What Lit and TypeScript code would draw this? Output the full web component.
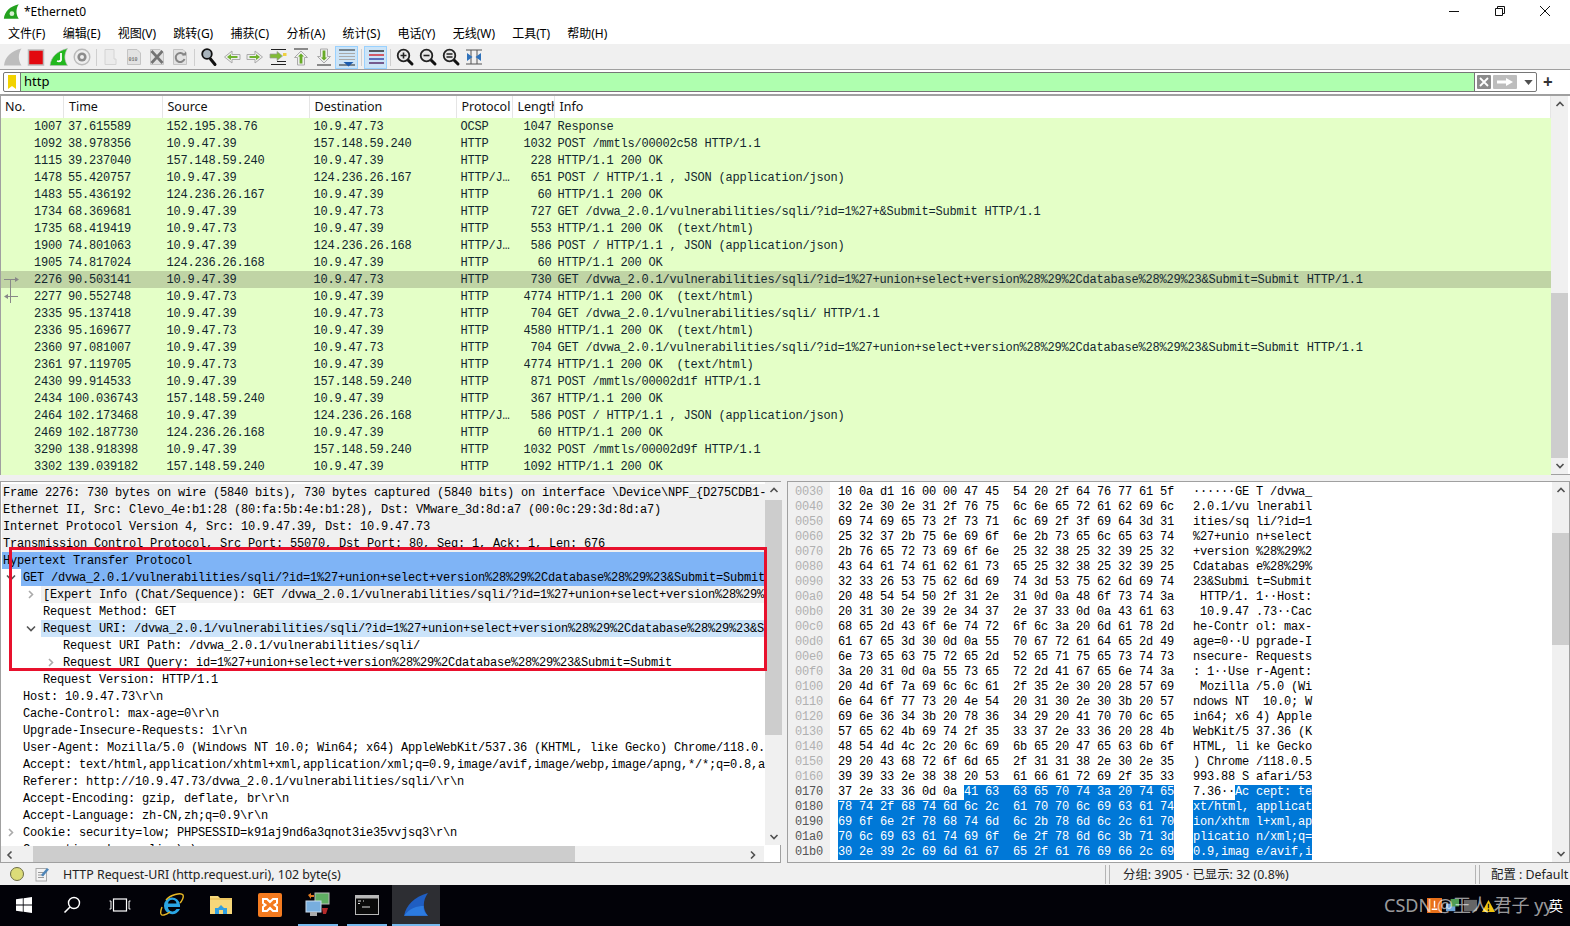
import { LitElement, html, css, svg } from "lit";
import { customElement } from "lit/decorators.js";

const MENUS = ["文件(F)", "编辑(E)", "视图(V)", "跳转(G)", "捕获(C)", "分析(A)", "统计(S)", "电话(Y)", "无线(W)", "工具(T)", "帮助(H)"];

const COLS = ["No.", "Time", "Source", "Destination", "Protocol", "Length", "Info"];

const SQLI = "/dvwa_2.0.1/vulnerabilities/sqli/";
const UNION = SQLI + "?id=1%27+union+select+version%28%29%2Cdatabase%28%29%23&Submit=Submit";

const PACKETS = [
  ["1007", "37.615589", "152.195.38.76", "10.9.47.73", "OCSP", "1047", "Response"],
  ["1092", "38.978356", "10.9.47.39", "157.148.59.240", "HTTP", "1032", "POST /mmtls/00002c58 HTTP/1.1"],
  ["1115", "39.237040", "157.148.59.240", "10.9.47.39", "HTTP", "228", "HTTP/1.1 200 OK"],
  ["1478", "55.420757", "10.9.47.39", "124.236.26.167", "HTTP/J…", "651", "POST / HTTP/1.1 , JSON (application/json)"],
  ["1483", "55.436192", "124.236.26.167", "10.9.47.39", "HTTP", "60", "HTTP/1.1 200 OK"],
  ["1734", "68.369681", "10.9.47.39", "10.9.47.73", "HTTP", "727", "GET " + SQLI + "?id=1%27+&Submit=Submit HTTP/1.1"],
  ["1735", "68.419419", "10.9.47.73", "10.9.47.39", "HTTP", "553", "HTTP/1.1 200 OK  (text/html)"],
  ["1900", "74.801063", "10.9.47.39", "124.236.26.168", "HTTP/J…", "586", "POST / HTTP/1.1 , JSON (application/json)"],
  ["1905", "74.817024", "124.236.26.168", "10.9.47.39", "HTTP", "60", "HTTP/1.1 200 OK"],
  ["2276", "90.503141", "10.9.47.39", "10.9.47.73", "HTTP", "730", "GET " + UNION + " HTTP/1.1"],
  ["2277", "90.552748", "10.9.47.73", "10.9.47.39", "HTTP", "4774", "HTTP/1.1 200 OK  (text/html)"],
  ["2335", "95.137418", "10.9.47.39", "10.9.47.73", "HTTP", "704", "GET " + SQLI + " HTTP/1.1"],
  ["2336", "95.169677", "10.9.47.73", "10.9.47.39", "HTTP", "4580", "HTTP/1.1 200 OK  (text/html)"],
  ["2360", "97.081007", "10.9.47.39", "10.9.47.73", "HTTP", "704", "GET " + UNION + " HTTP/1.1"],
  ["2361", "97.119705", "10.9.47.73", "10.9.47.39", "HTTP", "4774", "HTTP/1.1 200 OK  (text/html)"],
  ["2430", "99.914533", "10.9.47.39", "157.148.59.240", "HTTP", "871", "POST /mmtls/00002d1f HTTP/1.1"],
  ["2434", "100.036743", "157.148.59.240", "10.9.47.39", "HTTP", "367", "HTTP/1.1 200 OK"],
  ["2464", "102.173468", "10.9.47.39", "124.236.26.168", "HTTP/J…", "586", "POST / HTTP/1.1 , JSON (application/json)"],
  ["2469", "102.187730", "124.236.26.168", "10.9.47.39", "HTTP", "60", "HTTP/1.1 200 OK"],
  ["3290", "138.918398", "10.9.47.39", "157.148.59.240", "HTTP", "1032", "POST /mmtls/00002d9f HTTP/1.1"],
  ["3302", "139.039182", "157.148.59.240", "10.9.47.39", "HTTP", "1092", "HTTP/1.1 200 OK"],
];

// level, arrow (""|">"|"v"), row class, text
const DETAILS: [number, string, string, string][] = [
  [0, "", "grey", "Frame 2276: 730 bytes on wire (5840 bits), 730 bytes captured (5840 bits) on interface \\Device\\NPF_{D275CDB1-"],
  [0, "", "grey", "Ethernet II, Src: Clevo_4e:b1:28 (80:fa:5b:4e:b1:28), Dst: VMware_3d:8d:a7 (00:0c:29:3d:8d:a7)"],
  [0, "", "grey", "Internet Protocol Version 4, Src: 10.9.47.39, Dst: 10.9.47.73"],
  [0, "", "grey", "Transmission Control Protocol, Src Port: 55070, Dst Port: 80, Seq: 1, Ack: 1, Len: 676"],
  [0, "", "sel", "Hypertext Transfer Protocol"],
  [1, "v", "sel", "GET " + UNION + " HTTP/1.1\\r\\n"],
  [2, ">", "grey", "[Expert Info (Chat/Sequence): GET " + UNION + " HTTP/1.1\\r\\n]"],
  [2, "", "", "Request Method: GET"],
  [2, "v", "soft", "Request URI: " + UNION],
  [3, "", "", "Request URI Path: " + SQLI],
  [3, ">", "", "Request URI Query: id=1%27+union+select+version%28%29%2Cdatabase%28%29%23&Submit=Submit"],
  [2, "", "", "Request Version: HTTP/1.1"],
  [1, "", "", "Host: 10.9.47.73\\r\\n"],
  [1, "", "", "Cache-Control: max-age=0\\r\\n"],
  [1, "", "", "Upgrade-Insecure-Requests: 1\\r\\n"],
  [1, "", "", "User-Agent: Mozilla/5.0 (Windows NT 10.0; Win64; x64) AppleWebKit/537.36 (KHTML, like Gecko) Chrome/118.0.5993.88 Safari/537.36\\r\\n"],
  [1, "", "", "Accept: text/html,application/xhtml+xml,application/xml;q=0.9,image/avif,image/webp,image/apng,*/*;q=0.8,application/signed-exchange\\r\\n"],
  [1, "", "", "Referer: http://10.9.47.73/dvwa_2.0.1/vulnerabilities/sqli/\\r\\n"],
  [1, "", "", "Accept-Encoding: gzip, deflate, br\\r\\n"],
  [1, "", "", "Accept-Language: zh-CN,zh;q=0.9\\r\\n"],
  [1, ">", "", "Cookie: security=low; PHPSESSID=k91aj9nd6a3qnot3ie35vvjsq3\\r\\n"],
  [1, "", "", "Connection: keep-alive\\r\\n"],
];

const HEX_START = 0x30;
const SEL_START = 0x176;
const HEX = [
  "100ad11600004745 54202f647677615f", "322e302e312f7675 6c6e65726162696c", "6974696573 2f7371 6c692f3f69643d31",
  "253237 2b756e696f 6e2b73656c656374", "2b76657273696f6e 253238253239 2532", "4364617461626173 6525323825 323925",
  "3233265375626d69 743d5375626d6974", "2048545450 2f312e 310d0a486f73743a", "2031302e392e3437 2e37330d0a436163",
  "6865 2d436f6e7472 6f6c3a206d61782d", "6167653d300d0a55 706772616465 2d49", "6e7365637572652d 5265717565737473",
  "3a20310d0a557365 722d4167656e743a", "204d6f7a696c6c61 2f352e30202857 69", "6e646f7773204e54 2031302e303b2057",
  "696e36343b207836 342920 4170706c65", "5765624b69742f35 33372e3336202 84b", "48544d4c2c206c69 6b65204765636b6f",
  "29204368726f6d65 2f3131382e302e35", "3939332e38382053 6166617269 2f3533", "372e33360d0a4163 636570743a207465",
  "78742f68746d6c2c 6170706c69636174", "696f6e2f7868746d 6c2b786d6c2c6170", "706c69636174696f 6e2f786d6c3b713d",
  "302e392c696d6167 652f617669662c69",
].map((s) => s.replace(/ /g, ""));

const chevUp = svg`<path d="M1.5 6 L5 2.5 L8.5 6" fill="none" stroke="#505050" stroke-width="1.6"/>`;
const chevDown = svg`<path d="M1.5 3 L5 6.5 L8.5 3" fill="none" stroke="#505050" stroke-width="1.6"/>`;
const chevLeft = svg`<path d="M6.5 1.5 L3 5 L6.5 8.5" fill="none" stroke="#505050" stroke-width="1.6"/>`;
const chevRight = svg`<path d="M3 1.5 L6.5 5 L3 8.5" fill="none" stroke="#505050" stroke-width="1.6"/>`;

const chev = (p: unknown) => html`<svg class="chev" viewBox="0 0 10 9" width="10" height="9">${p}</svg>`;

const FIN = "M1 18.5 C2 10 8 4 18.5 1.5 C15 7 15 13 18.5 18.5 Z";

const ic = (body: unknown) => html`<svg class="tool" viewBox="0 0 20 20" width="20" height="20">${body}</svg>`;

const doc = svg`<path d="M3.5 2.5 H13 L16.5 6 V17.5 H3.5 Z" fill="#e2e2e2" stroke="#c4c4c4"/>`;
const lens = (inner: unknown) => svg`
  <path d="M12.5 12.5 L17 17" stroke="#111" stroke-width="3" stroke-linecap="round"/>
  <circle cx="8.5" cy="8.5" r="5.8" fill="#e8e8e8" stroke="#222" stroke-width="1.8"/>${inner}`;
const arrowH = (flip: boolean) => svg`
  <g transform=${flip ? "translate(20 0) scale(-1 1)" : ""}>
    <path d="M2 7.5 H10 V4 L17.5 10 L10 16 V12.5 H2 Z" fill="#eee" stroke="#aaa"/>
    <path d="M4.5 9 H11 V7 L15 10 L11 13 V11 H4.5 Z" fill="#6fb22e"/>
  </g>`;

const TOOLS: unknown[] = [
  ic(svg`<path d=${FIN} fill="#bdbdbd"/>`),
  ic(svg`<rect x="2.5" y="3" width="15" height="15" fill="#e3090f" stroke="#bbb" stroke-width="1.5"/>`),
  ic(svg`<path d=${FIN} fill="#22b81e" stroke="#bbb" stroke-width=".6"/><path d="M12 6 V13 Q11 15 8 14" fill="none" stroke="#fff" stroke-width="1.8"/>`),
  ic(svg`<circle cx="10" cy="10" r="7.8" fill="#eee" stroke="#bbb" stroke-width="1.4"/><circle cx="10" cy="10" r="4.6" fill="#8c8c8c"/><circle cx="10" cy="10" r="2" fill="#eee"/>`),
  null,
  ic(svg`<path d="M4 2.5 H13 V12 L15 12 V17.5 H4 Z" fill="#ebebeb" stroke="#d4d4d4"/>`),
  ic(svg`${doc}<text x="4.6" y="14" font-size="5" font-family="Liberation Mono" font-weight="700" fill="#777">010</text>`),
  ic(svg`${doc}<path d="M4.5 4 L15.5 16 M15.5 4 L4.5 16" stroke="#737373" stroke-width="2.6"/>`),
  ic(svg`${doc}<path d="M14 8 A4.5 4.5 0 1 0 14.5 12" fill="none" stroke="#858585" stroke-width="2"/><path d="M12 8.5 H16 V4.5 Z" fill="#858585"/>`),
  null,
  ic(svg`<path d="M11.5 12 L16 17.5" stroke="#111" stroke-width="3" stroke-linecap="round"/><circle cx="8" cy="7" r="4.8" fill="#a9b4bc" stroke="#111" stroke-width="1.8"/>`),
  ic(arrowH(true)),
  ic(arrowH(false)),
  ic(svg`<path d="M3 2.5 H18 M3 17.5 H18 M9 14.5 H18" stroke="#222" stroke-width="1.2"/><path d="M2 7 H9 V4.5 L14.5 9 L9 13.5 V11 H2 Z" fill="#80bb35" stroke="#999" stroke-width=".7"/><rect x="15" y="6" width="3.5" height="3" fill="#f0d040"/>`),
  ic(svg`<path d="M3 2 H17" stroke="#444" stroke-width="1.2"/><path d="M6.5 18 V10.5 H3.5 L10 4 L16.5 10.5 H13.5 V18 Z" fill="#eee" stroke="#aaa"/><path d="M8.6 16.5 V9.5 H7 L10 6.5 L13 9.5 H11.4 V16.5 Z" fill="#68ab26"/>`),
  ic(svg`<path d="M3 18 H17" stroke="#444" stroke-width="1.2"/><path d="M6.5 2 V9.5 H3.5 L10 16 L16.5 9.5 H13.5 V2 Z" fill="#eee" stroke="#aaa"/><path d="M8.6 3.5 V10.5 H7 L10 13.5 L13 10.5 H11.4 V3.5 Z" fill="#68ab26"/>`),
  ic(svg`<path d="M2 3 H18 M2 18 H18" stroke="#222" stroke-width="1.2"/><path d="M2 6.5 H18 M2 9.5 H18 M2 12.5 H18" stroke="#aaa" stroke-width="1.2"/><path d="M6.5 15 H16.5 L11.5 19.5 Z" fill="#1c5cae"/>`),
  null,
  ic(svg`<path d="M3 4 H18" stroke="#222" stroke-width="1.4"/><path d="M3 8 H18" stroke="#d4202a" stroke-width="1.4"/><path d="M3 12 H18" stroke="#2a3ea0" stroke-width="1.4"/><path d="M3 16 H18" stroke="#502060" stroke-width="1.4"/>`),
  null,
  ic(lens(svg`<path d="M5.5 8.5 H11.5 M8.5 5.5 V11.5" stroke="#222" stroke-width="1.6"/>`)),
  ic(lens(svg`<path d="M5.5 8.5 H11.5" stroke="#222" stroke-width="1.6"/>`)),
  ic(lens(svg`<path d="M5.5 7 H11.5 M5.5 10 H11.5" stroke="#222" stroke-width="1.3"/>`)),
  ic(svg`<path d="M2 3 H18 M2 17 H18 M7 3 V17 M13 3 V17" stroke="#555" stroke-width="1"/><path d="M3 6 L8.5 10 L3 14 Z M17 6 L11.5 10 L17 14 Z" fill="#2f72bb"/>`),
];

@customElement("app-root")
export class AppRoot extends LitElement {
  static styles = css`
    :host {
      display: flex;
      flex-direction: column;
      width: 1570px;
      height: 926px;
      overflow: hidden;
      position: relative;
      background: #f0f0f0;
      color: #000;
      font-family: "Noto Sans", "Noto Sans CJK SC", sans-serif;
      font-size: 12px;
    }
    svg { display: block; flex: none; }

    .title {
      height: 22px;
      background: #fff;
      display: flex;
      align-items: center;
      padding-left: 3px;
      flex: none;
    }
    .title .name { flex: 1; margin-left: 4px; }
    .winbtn { width: 45.5px; display: flex; justify-content: center; }
    .winbtn.last { margin-right: 2px; }

    .menu {
      height: 22px;
      background: #fff;
      display: flex;
      align-items: center;
      gap: 17.2px;
      padding-left: 8px;
      flex: none;
      border-bottom: 1px solid #f0f0f0;
    }

    .toolbar {
      height: 24px;
      flex: none;
      display: flex;
      align-items: center;
      padding-left: 1px;
      background: #f0f0f0;
      border-bottom: 1px solid #a0a0a0;
    }
    .tbtn {
      width: 23px;
      height: 23px;
      display: flex;
      align-items: center;
      justify-content: center;
      box-sizing: border-box;
    }
    .tbtn.on { background: #cce4f7; border: 1px solid #99d1ff; }
    .tsep { width: 6px; display: flex; justify-content: center; }
    .tsep::after { content: ""; width: 1px; height: 17px; background: #cfcfcf; }

    .filter {
      height: 24px;
      flex: none;
      background: #fff;
      display: flex;
      align-items: center;
      padding-left: 3px;
    }
    .fbox {
      width: 1534px;
      height: 20px;
      box-sizing: border-box;
      border: 1px solid #767676;
      border-radius: 2px;
      display: flex;
      align-items: stretch;
    }
    .bookmark {
      width: 16px;
      display: flex;
      align-items: center;
      justify-content: center;
      border-right: 1px solid #767676;
    }
    .ftext {
      width: 1454px;
      background: #afffaf;
      border-right: 1px solid #767676;
      padding-left: 3px;
      box-sizing: border-box;
      font-size: 13px;
      line-height: 16px;
    }
    .fbtns { flex: 1; display: flex; align-items: center; gap: 2px; padding-left: 2px; }
    .plus { margin-left: 6px; font-size: 17px; font-weight: 700; color: #333; line-height: 20px; }

    .list {
      height: 381px;
      flex: none;
      display: flex;
      background: #fff;
      border-top: 2px solid #a0a0a0;
      border-left: 1px solid #a0a0a0;
      box-sizing: border-box;
      border-bottom: 1px solid #a0a0a0;
    }
    .listmain { width: 1550px; flex: none; }
    .grid {
      display: grid;
      grid-template-columns: 63px 98.5px 147px 147px 56px 42px 1fr;
    }
    .head { height: 22px; background: #fff; }
    .head div {
      line-height: 21px;
      padding-left: 5px;
      overflow: hidden;
      white-space: nowrap;
      border-right: 1px solid #e5e5e5;
      font-size: 12.5px;
      color: #111;
    }
    .head div:first-child { padding-left: 4px; }
    .row {
      height: 17px;
      background: #e4ffc7;
      color: #12272e;
      position: relative;
    }
    .row.cur { background: #c0d4a5; }
    .row div { height: 17px; line-height: 19px; padding-left: 4px; white-space: pre; overflow: hidden; }
    .row .r { text-align: right; padding: 0 2px 0 0; }
    .row .r5 { text-align: right; padding: 0 3px 0 0; }
    .row .i { padding-left: 3px; }
    .row svg { position: absolute; left: 1px; top: 0; }
    .row, .drow, .hex {
      font-family: "Liberation Mono", monospace;
      font-size: 12px;
      letter-spacing: -0.2px;
    }

    .vbar {
      width: 17px;
      flex: none;
      background: #f0f0f0;
      position: relative;
      display: flex;
      flex-direction: column;
      align-items: center;
      justify-content: space-between;
      padding: 4px 0;
      box-sizing: border-box;
    }
    .thumb { position: absolute; left: 0; right: 0; background: #cdcdcd; }

    .split { height: 6px; flex: none; background: #f0f0f0; }

    .lower { height: 382px; flex: none; display: flex; }
    .pane {
      box-sizing: border-box;
      border: 1px solid #a0a0a0;
      background: #fff;
      display: flex;
      height: 100%;
    }
    .left { width: 781px; flex: none; flex-direction: column; }
    .leftbody { flex: 1; display: flex; min-height: 0; }
    .drows { width: 764px; flex: none; overflow: hidden; padding-top: 2px; box-sizing: border-box; }
    .drow {
      height: 17px;
      overflow: hidden;
      position: relative;
    }
    .drow .bg { display: block; height: 17px; line-height: 19px; white-space: pre; overflow: hidden; }
    .drow.grey .bg { background: #f0f0f0; }
    .drow.sel .bg { background: #7fb4f6; }
    .drow.soft .bg { background: #cce4fa; }
    .drow svg { position: absolute; top: 4px; }
    .hbar {
      height: 16px;
      flex: none;
      background: #f0f0f0;
      display: flex;
      align-items: center;
      justify-content: space-between;
      padding: 0 6px 0 4px;
      position: relative;
      box-sizing: border-box;
      margin-right: 16px;
    }
    .hbar .hthumb { position: absolute; left: 32px; width: 542px; top: 0; bottom: 0; background: #cdcdcd; }

    .gutter { width: 6px; flex: none; background: #f0f0f0; }

    .right { flex: 1; min-width: 0; }
    .hexmain { flex: 1; display: flex; overflow: hidden; }
    .offs { width: 42px; flex: none; background: #f0f0f0; padding: 3px 0 0 7px; box-sizing: border-box; }
    .hex { height: 15px; line-height: 15px; white-space: pre; }
    .offs .hex { color: #b0b0b0; }
    .offs .hex.d { color: #555; }
    .bytes { padding: 3px 0 0 8px; width: 363px; flex: none; box-sizing: border-box; }
    .ascii { flex: 1; padding-top: 3px; }
    .mark { display: inline-block; height: 15px; vertical-align: top; background: #0078d7; color: #fff; }

    .status {
      height: 22px;
      flex: none;
      display: flex;
      align-items: center;
      background: #f0f0f0;
      padding-left: 10px;
      color: #222;
      font-size: 12.4px;
    }
    .status .msg { width: 1042px; margin-left: 13px; }
    .ssep { width: 3px; height: 19px; border: solid #b4b4b4; border-width: 0 1px; margin-right: 13px; }
    .status .stat { width: 352px; }
    .ssep.second { margin-right: 11px; }
    .dot {
      width: 12px;
      height: 12px;
      border-radius: 50%;
      background: #dcdc78;
      border: 1px solid #6c6c44;
      margin-right: 10px;
    }

    .task {
      flex: 1;
      background: #020208;
      display: flex;
      align-items: stretch;
      position: relative;
    }
    .tk {
      width: 48px;
      display: flex;
      align-items: center;
      justify-content: center;
      box-sizing: border-box;
      border-bottom: 2px solid transparent;
    }
    .tk.app { width: 49px; }
    .tk.first { margin-left: 3px; }
    .tk.run { border-bottom-color: #76b9ed; margin: 0 5px 0 4px; width: 40px; }
    .tk.act { background: #2d2e33; border-bottom-color: #76b9ed; }

    .redbox {
      position: absolute;
      left: 9px;
      top: 547px;
      width: 758px;
      height: 124px;
      box-sizing: border-box;
      border: 3px solid #e8112d;
    }
    .wm {
      position: absolute;
      left: 1384px;
      top: 892px;
      font-size: 18px;
      line-height: 26px;
      color: rgba(255, 255, 255, 0.62);
      white-space: nowrap;
    }
    .ime {
      position: absolute;
      right: 7px;
      top: 897px;
      color: #fff;
      font-size: 14px;
      line-height: 18px;
    }
    .trayicons {
      position: absolute;
      left: 1427px;
      top: 898px;
      display: flex;
      gap: 3px;
    }
  `;

  private vbar(top: number, h: number, total: number) {
    return html`<div class="vbar" style="height:${total}px">
      <div class="thumb" style="top:${top}px;height:${h}px"></div>
      ${chev(chevUp)}${chev(chevDown)}
    </div>`;
  }

  private renderTitle() {
    return html`<div class="title">
      <svg viewBox="0 0 20 20" width="17" height="17">
        <path d=${FIN} fill="#24a21f"/>
        <circle cx="10.5" cy="12.5" r="2.8" fill="#d6efd0"/>
      </svg>
      <span class="name">*Ethernet0</span>
      <div class="winbtn"><svg viewBox="0 0 12 12" width="12" height="12"><path d="M1 6.5 H11" stroke="#111"/></svg></div>
      <div class="winbtn"><svg viewBox="0 0 12 12" width="12" height="12"><path d="M1.5 3.5 H8.5 V10.5 H1.5 Z M3.5 3.5 V1.5 H10.5 V8.5 H8.5" fill="none" stroke="#111"/></svg></div>
      <div class="winbtn last"><svg viewBox="0 0 12 12" width="12" height="12"><path d="M1 1 L11 11 M11 1 L1 11" stroke="#111"/></svg></div>
    </div>`;
  }

  private renderToolbar() {
    return html`<div class="toolbar">
      ${TOOLS.map((t, i) =>
        t === null
          ? html`<div class="tsep"></div>`
          : html`<div class="tbtn ${i === 16 || i === 18 ? "on" : ""}">${t}</div>`
      )}
    </div>`;
  }

  private renderFilter() {
    return html`<div class="filter">
      <div class="fbox">
        <div class="bookmark">
          <svg viewBox="0 0 8 14" width="8" height="14"><path d="M0 0 H8 V14 L4 11 L0 14 Z" fill="#f2d200"/></svg>
        </div>
        <div class="ftext">http</div>
        <div class="fbtns">
          <svg viewBox="0 0 14 14" width="14" height="14"><rect width="14" height="14" rx="1" fill="#8c8c8c"/><path d="M3 3 L11 11 M11 3 L3 11" stroke="#fff" stroke-width="1.8"/></svg>
          <svg viewBox="0 0 24 14" width="24" height="14"><rect width="24" height="14" rx="1" fill="#bdbdbd"/><path d="M4 5.5 H13 V3 L20 7 L13 11 V8.5 H4 Z" fill="#fff"/></svg>
          <svg viewBox="0 0 10 6" width="9" height="5" style="margin-left:5px"><path d="M0 0 H10 L5 6 Z" fill="#505050"/></svg>
        </div>
      </div>
      <span class="plus">+</span>
    </div>`;
  }

  private renderList() {
    return html`<div class="list">
      <div class="listmain">
        <div class="grid head">${COLS.map((c) => html`<div>${c}</div>`)}</div>
        ${PACKETS.map(
          (p) => html`<div class="grid row ${p[0] === "2276" ? "cur" : ""}">
            ${p[0] === "2276"
              ? html`<svg viewBox="0 0 18 17" width="18" height="17"><path d="M8.5 8 V17" stroke="#888"/><path d="M2 8.5 H13" stroke="#888"/><path d="M13 6 L17 8.5 L13 11 Z" fill="#888"/></svg>`
              : p[0] === "2277"
                ? html`<svg viewBox="0 0 18 17" width="18" height="17"><path d="M8.5 0 V15" stroke="#888"/><path d="M5 8.5 H16" stroke="#888"/><path d="M6 6 L2 8.5 L6 11 Z" fill="#888"/></svg>`
                : ""}
            <div class="r">${p[0]}</div>
            <div>${p[1]}</div>
            <div>${p[2]}</div>
            <div>${p[3]}</div>
            <div>${p[4]}</div>
            <div class="r5">${p[5]}</div>
            <div class="i">${p[6]}</div>
          </div>`
        )}
      </div>
      ${this.vbar(197, 165, 378)}
    </div>`;
  }

  private renderDetails() {
    return html`<div class="pane left">
      <div class="leftbody">
        <div class="drows">
          ${DETAILS.map(([lvl, arrow, cls, text]) => {
            const x = 2 + lvl * 20;
            return html`<div class="drow ${cls}">
              <span class="bg" style="margin-left:${lvl === 0 ? 1 : x - 2}px;padding-left:${lvl === 0 ? 1 : 2}px">${text}</span>
              ${arrow
                ? html`<svg viewBox="0 0 10 9" width="10" height="9" style="left:${x - 17}px">
                    ${arrow === ">"
                      ? svg`<path d="M3 1 L6.5 4.5 L3 8" fill="none" stroke="#aaa" stroke-width="1.6"/>`
                      : svg`<path d="M1 2.5 L5 6.5 L9 2.5" fill="none" stroke="#555" stroke-width="1.6"/>`}
                  </svg>`
                : ""}
            </div>`;
          })}
        </div>
        ${this.vbar(18, 235, 363)}
      </div>
      <div class="hbar"><div class="hthumb"></div>${chev(chevLeft)}${chev(chevRight)}</div>
    </div>`;
  }

  private renderHex() {
    const selStart = (i: number) => {
      const base = HEX_START + i * 16;
      return base + 16 <= SEL_START ? 16 : Math.max(0, SEL_START - base);
    };
    const hexLine = (h: string, i: number) => {
      const txt = (from: number, to: number) => {
        let s = "";
        for (let n = from; n < to; n++) {
          s += h.slice(n * 2, n * 2 + 2) + (n === 15 ? "" : n === 7 ? "  " : " ");
        }
        return s;
      };
      const start = selStart(i);
      return html`<div class="hex">${txt(0, start)}${start < 16 ? html`<span class="mark">${txt(start, 16)}</span>` : ""}</div>`;
    };
    const asciiLine = (h: string, i: number) => {
      const ch = (n: number) => {
        const v = parseInt(h.slice(n * 2, n * 2 + 2), 16);
        return v >= 32 && v < 127 ? String.fromCharCode(v) : "·";
      };
      const txt = (from: number, to: number) => {
        let s = "";
        for (let n = from; n < to; n++) s += ch(n) + (n === 7 ? " " : "");
        return s;
      };
      const start = selStart(i);
      return html`<div class="hex">${txt(0, start)}${start < 16 ? html`<span class="mark">${txt(start, 16)}</span>` : ""}</div>`;
    };
    return html`<div class="pane right">
      <div class="hexmain">
        <div class="offs">
          ${HEX.map((_, i) => {
            const off = HEX_START + i * 16;
            return html`<div class="hex ${off >= 0x170 ? "d" : ""}">${off.toString(16).padStart(4, "0")}</div>`;
          })}
        </div>
        <div class="bytes">${HEX.map(hexLine)}</div>
        <div class="ascii">${HEX.map(asciiLine)}</div>
      </div>
      ${this.vbar(51, 112, 380)}
    </div>`;
  }

  private renderStatus() {
    return html`<div class="status">
      <div class="dot"></div>
      <svg viewBox="0 0 16 16" width="16" height="16">
        <rect x="2" y="2.5" width="10.5" height="12.5" fill="#f4f4f4" stroke="#aaa"/>
        <path d="M4 6.5 H10 M4 9 H10 M4 11.5 H10" stroke="#999"/>
        <path d="M7 9 L13 2 L15 3.5 L9 10.5 Z" fill="#4f86b8"/>
      </svg>
      <span class="msg">HTTP Request-URI (http.request.uri), 102 byte(s)</span>
      <div class="ssep"></div>
      <span class="stat">分组: 3905 · 已显示: 32 (0.8%)</span>
      <div class="ssep second"></div>
      <span>配置 : Default</span>
    </div>`;
  }

  private renderTask() {
    return html`<div class="task">
      <div class="tk">
        <svg viewBox="0 0 16 16" width="16" height="16"><path d="M0 2.3 L6.8 1.3 V7.6 H0 Z M7.6 1.2 L16 0 V7.6 H7.6 Z M0 8.4 H6.8 V14.7 L0 13.7 Z M7.6 8.4 H16 V16 L7.6 14.8 Z" fill="#fff"/></svg>
      </div>
      <div class="tk">
        <svg viewBox="0 0 18 18" width="18" height="18"><circle cx="11" cy="7" r="5.5" fill="none" stroke="#fff" stroke-width="1.4"/><path d="M7 11 L1.5 16.5" stroke="#fff" stroke-width="1.6"/></svg>
      </div>
      <div class="tk">
        <svg viewBox="0 0 22 14" width="22" height="14"><rect x="4.5" y="1" width="13" height="12" fill="none" stroke="#fff" stroke-width="1.2"/><path d="M0.5 3 H2 V11 H0.5 M21.5 3 H20 V11 H21.5" fill="none" stroke="#fff"/></svg>
      </div>
      <div class="tk app first">
        <svg viewBox="0 0 26 24" width="26" height="24">
          <path d="M5 13 A8 8 0 0 1 21 12 V14 H9 A4.5 4.5 0 0 0 17.5 16 H21 A8.3 8.3 0 0 1 5 13 Z M9 10.5 H17.5 A4.3 4.3 0 0 0 9 10.5 Z" fill="#2aa6e4" fill-rule="evenodd"/>
          <path d="M7 7 C11 2 22 -1 24 2 C25 4 23 8 21 10 M3 14 C1 19 1 23 5 22 C7 21.5 9 20.5 11 19" fill="none" stroke="#e8b825" stroke-width="1.4"/>
        </svg>
      </div>
      <div class="tk app">
        <svg viewBox="0 0 24 20" width="24" height="20">
          <path d="M1 1 H9 L11 3 H23 V19 H1 Z" fill="#f6d77a"/>
          <path d="M1 4 H23" stroke="#e3b446"/>
          <path d="M6 19 V13 H9 L12 10 L15 13 H18 V19 Z" fill="#2f9fe2"/>
          <rect x="10" y="15" width="4" height="4" fill="#f6d77a"/>
        </svg>
      </div>
      <div class="tk app">
        <svg viewBox="0 0 24 24" width="24" height="24">
          <rect width="24" height="24" rx="2" fill="#f47b20"/>
          <path d="M5 6 H9 L12 9 L15 6 H19 V10 L16.5 12 L19 14 V18 H15 L12 15 L9 18 H5 V14 L7.5 12 L5 10 Z" fill="none" stroke="#fff" stroke-width="2"/>
        </svg>
      </div>
      <div class="tk run">
        <svg viewBox="0 0 26 26" width="26" height="26">
          <rect x="10" y="1" width="14" height="11" fill="#5fae62" stroke="#bbb"/>
          <path d="M3 3 L6 1 V3 H9 V5 H6 V7 Z" fill="#e07a20"/>
          <rect x="1" y="9" width="15" height="11" fill="#78aede" stroke="#cde"/>
          <rect x="5" y="20" width="7" height="4" fill="#aaa"/>
          <path d="M17 16 H23 L21 22 H18 Z" fill="#b32a2a"/>
        </svg>
      </div>
      <div class="tk run">
        <svg viewBox="0 0 24 20" width="24" height="20">
          <rect x=".5" y=".5" width="23" height="19" fill="#0a0a0a" stroke="#b8b8b8"/>
          <rect x="1" y="1" width="22" height="2.5" fill="#b8b8b8"/>
          <path d="M3 6 H6 M8 6 H9 M3 8.5 H5 M7 12 H15" stroke="#ddd"/>
        </svg>
      </div>
      <div class="tk act">
        <svg viewBox="0 0 24 24" width="26" height="26"><path d="M1 22 C3 12 10 5 23 1 C18 8 18 16 23 22 Z" fill="#1f5ec2"/><path d="M1 22 C6 15 13 13 19 13 C19 17 20 19 23 22 Z" fill="#2c7be0"/></svg>
      </div>
    </div>`;
  }

  render() {
    return html`
      ${this.renderTitle()}
      <div class="menu">${MENUS.map((m) => html`<span>${m}</span>`)}</div>
      ${this.renderToolbar()}
      ${this.renderFilter()}
      ${this.renderList()}
      <div class="split"></div>
      <div class="lower">
        ${this.renderDetails()}
        <div class="gutter"></div>
        ${this.renderHex()}
      </div>
      ${this.renderStatus()}
      ${this.renderTask()}
      <div class="redbox"></div>
      <div class="trayicons">
        <svg viewBox="0 0 16 16" width="15" height="15"><rect width="16" height="16" fill="#e8701a"/><path d="M8 3 V10 M5 12 H11" stroke="#fff" stroke-width="1.5"/></svg>
        <svg viewBox="0 0 16 16" width="15" height="15"><rect x="1" y="6" width="10" height="8" fill="#6fa4d8"/><rect x="6" y="1" width="9" height="8" fill="#4f9d54"/></svg>
        <svg viewBox="0 0 16 16" width="15" height="15"><rect x="1" y="2" width="14" height="12" fill="#666"/></svg>
        <svg viewBox="0 0 16 16" width="15" height="15"><path d="M8 2 L15 15 H1 Z" fill="#f2c40f"/><path d="M8 6 V11 M8 12 V14" stroke="#222" stroke-width="1.4"/></svg>
      </div>
      <div class="wm">CSDN @王人 君子 yy</div>
      <div class="ime">英</div>
    `;
  }
}
